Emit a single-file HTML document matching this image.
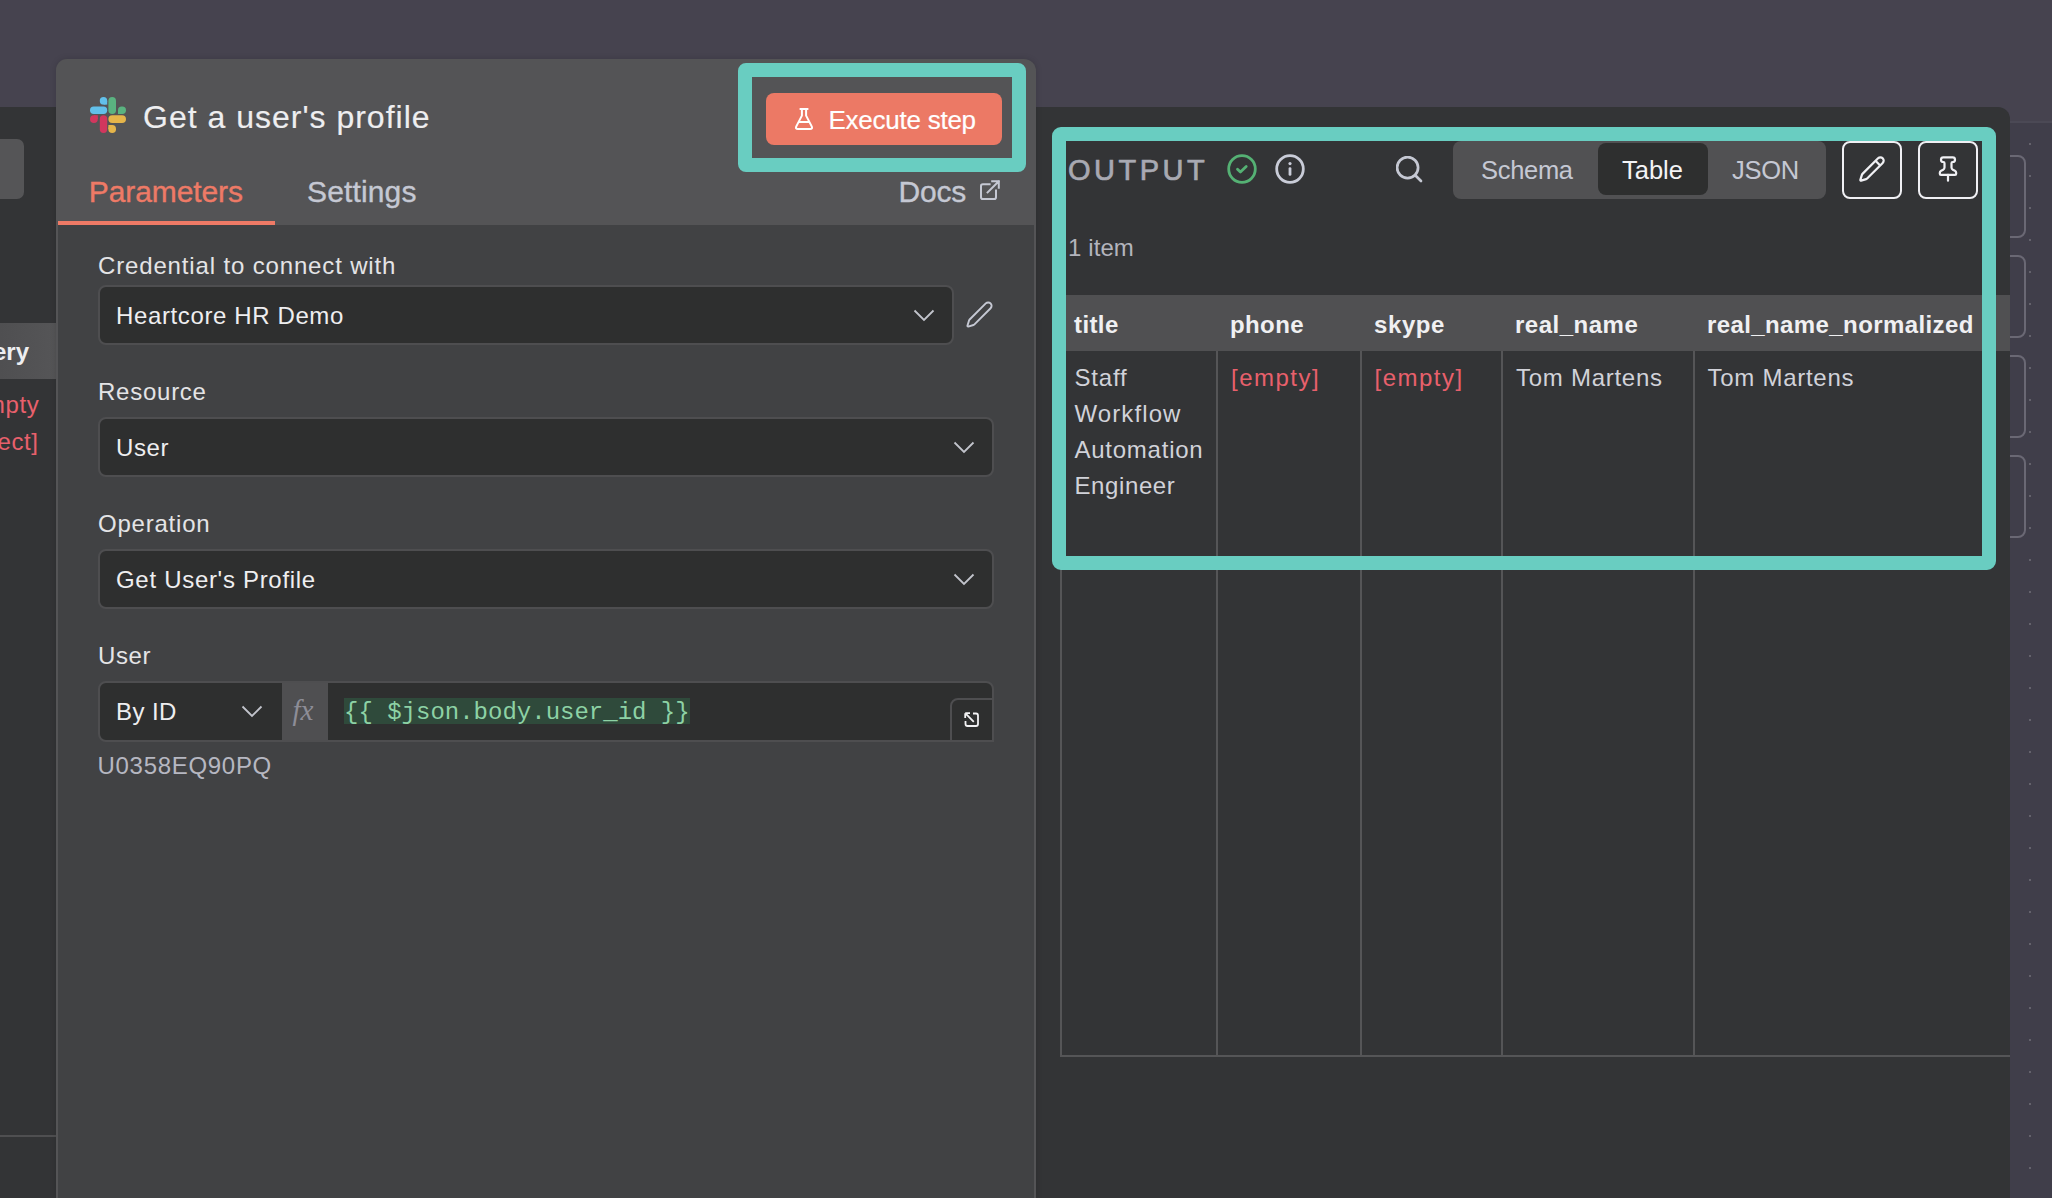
<!DOCTYPE html>
<html><head><meta charset="utf-8"><style>
html,body{margin:0;padding:0;}
body{width:2052px;height:1198px;overflow:hidden;position:relative;background:#46434f;font-family:"Liberation Sans",sans-serif;}
.t{position:absolute;white-space:nowrap;line-height:normal;}
.r{position:absolute;}
</style></head><body>
<div class="r" style="left:2010px;top:121px;width:42px;height:2px;background:#4b4955"></div>
<div class="r" style="left:2010px;top:123px;width:42px;height:1075px;background:#403e4a"></div>
<div class="r" style="left:2029px;top:143px;width:2px;height:2px;background:#64626c"></div>
<div class="r" style="left:2029px;top:175px;width:2px;height:2px;background:#64626c"></div>
<div class="r" style="left:2029px;top:207px;width:2px;height:2px;background:#64626c"></div>
<div class="r" style="left:2029px;top:239px;width:2px;height:2px;background:#64626c"></div>
<div class="r" style="left:2029px;top:271px;width:2px;height:2px;background:#64626c"></div>
<div class="r" style="left:2029px;top:303px;width:2px;height:2px;background:#64626c"></div>
<div class="r" style="left:2029px;top:335px;width:2px;height:2px;background:#64626c"></div>
<div class="r" style="left:2029px;top:367px;width:2px;height:2px;background:#64626c"></div>
<div class="r" style="left:2029px;top:399px;width:2px;height:2px;background:#64626c"></div>
<div class="r" style="left:2029px;top:431px;width:2px;height:2px;background:#64626c"></div>
<div class="r" style="left:2029px;top:463px;width:2px;height:2px;background:#64626c"></div>
<div class="r" style="left:2029px;top:495px;width:2px;height:2px;background:#64626c"></div>
<div class="r" style="left:2029px;top:527px;width:2px;height:2px;background:#64626c"></div>
<div class="r" style="left:2029px;top:559px;width:2px;height:2px;background:#64626c"></div>
<div class="r" style="left:2029px;top:591px;width:2px;height:2px;background:#64626c"></div>
<div class="r" style="left:2029px;top:623px;width:2px;height:2px;background:#64626c"></div>
<div class="r" style="left:2029px;top:655px;width:2px;height:2px;background:#64626c"></div>
<div class="r" style="left:2029px;top:687px;width:2px;height:2px;background:#64626c"></div>
<div class="r" style="left:2029px;top:719px;width:2px;height:2px;background:#64626c"></div>
<div class="r" style="left:2029px;top:751px;width:2px;height:2px;background:#64626c"></div>
<div class="r" style="left:2029px;top:783px;width:2px;height:2px;background:#64626c"></div>
<div class="r" style="left:2029px;top:815px;width:2px;height:2px;background:#64626c"></div>
<div class="r" style="left:2029px;top:847px;width:2px;height:2px;background:#64626c"></div>
<div class="r" style="left:2029px;top:879px;width:2px;height:2px;background:#64626c"></div>
<div class="r" style="left:2029px;top:911px;width:2px;height:2px;background:#64626c"></div>
<div class="r" style="left:2029px;top:943px;width:2px;height:2px;background:#64626c"></div>
<div class="r" style="left:2029px;top:975px;width:2px;height:2px;background:#64626c"></div>
<div class="r" style="left:2029px;top:1007px;width:2px;height:2px;background:#64626c"></div>
<div class="r" style="left:2029px;top:1039px;width:2px;height:2px;background:#64626c"></div>
<div class="r" style="left:2029px;top:1071px;width:2px;height:2px;background:#64626c"></div>
<div class="r" style="left:2029px;top:1103px;width:2px;height:2px;background:#64626c"></div>
<div class="r" style="left:2029px;top:1135px;width:2px;height:2px;background:#64626c"></div>
<div class="r" style="left:2029px;top:1167px;width:2px;height:2px;background:#64626c"></div>
<div class="r" style="left:1990px;top:155px;width:36px;height:83px;border:2px solid #6a6874;border-radius:8px;box-sizing:border-box"></div>
<div class="r" style="left:1990px;top:255px;width:36px;height:83px;border:2px solid #6a6874;border-radius:8px;box-sizing:border-box"></div>
<div class="r" style="left:1990px;top:355px;width:36px;height:83px;border:2px solid #6a6874;border-radius:8px;box-sizing:border-box"></div>
<div class="r" style="left:1990px;top:455px;width:36px;height:83px;border:2px solid #6a6874;border-radius:8px;box-sizing:border-box"></div>
<div class="r" style="left:0px;top:107px;width:2010px;height:1091px;background:#333436;border-top-right-radius:12px"></div>
<div class="r" style="left:-20px;top:139px;width:44px;height:60px;background:#555557;border-radius:7px"></div>
<div class="r" style="left:0px;top:323px;width:56px;height:56px;background:linear-gradient(90deg,#4f4f51 0%,#555557 100%)"></div>
<div class="t" style="left:-7.0px;top:338.3px;font-size:24px;color:#eeeef0;font-weight:bold;letter-spacing:0px;font-family:'Liberation Sans', sans-serif;">ery</div>
<div class="t" style="left:-8.5px;top:391.3px;font-size:24px;color:#e8606c;font-weight:normal;letter-spacing:0.6px;font-family:'Liberation Sans', sans-serif;">npty</div>
<div class="t" style="left:-2.5px;top:428.3px;font-size:24px;color:#e8606c;font-weight:normal;letter-spacing:0.6px;font-family:'Liberation Sans', sans-serif;">ect]</div>
<div class="r" style="left:0px;top:1135px;width:56px;height:2px;background:#4f4f51"></div>
<div class="r" style="left:56px;top:59px;width:980px;height:1139px;background:#545456;border-radius:11px 12px 0 0;box-shadow:0 0 6px rgba(0,0,0,0.15)"></div>
<div class="r" style="left:58px;top:225px;width:976px;height:973px;background:#414244"></div>
<svg class="r" style="left:90px;top:97px;" width="36" height="36" viewBox="0 0 36 36" fill="none">
<rect x="0" y="9.6" width="17.2" height="7.4" rx="3.7" fill="#62c0ea"/>
<rect x="9.8" y="0" width="7.4" height="7.6" rx="3.7" fill="#62c0ea"/><rect x="13.5" y="3.8" width="3.7" height="3.8" fill="#62c0ea"/>
<rect x="18.4" y="0" width="7.6" height="17" rx="3.8" fill="#5ab380"/>
<rect x="28" y="9.6" width="8" height="7.4" rx="3.7" fill="#5ab380"/><rect x="28" y="13.3" width="3.9" height="3.7" fill="#5ab380"/>
<rect x="0" y="18.2" width="7.8" height="7.8" rx="3.9" fill="#d1375e"/><rect x="3.9" y="18.2" width="3.9" height="3.9" fill="#d1375e"/>
<rect x="9.8" y="18.2" width="7.4" height="17.8" rx="3.7" fill="#d1375e"/>
<rect x="18.4" y="18.2" width="17.6" height="7.8" rx="3.9" fill="#e5b54a"/>
<rect x="18.4" y="28" width="7.6" height="8" rx="3.8" fill="#e5b54a"/><rect x="18.4" y="28" width="3.8" height="4" fill="#e5b54a"/>
</svg>
<div class="t" style="left:143.0px;top:98.5px;font-size:32px;color:#eeeef0;font-weight:normal;letter-spacing:1.0px;font-family:'Liberation Sans', sans-serif;-webkit-text-stroke:0.15px #eeeef0">Get a user's profile</div>
<div class="r" style="left:738px;top:63px;width:288px;height:109px;border:14px solid #69cdc1;border-radius:8px;box-sizing:border-box"></div>
<div class="r" style="left:766px;top:93px;width:236px;height:52px;background:#ec7965;border-radius:8px"></div>
<svg class="r" style="left:795px;top:108px;" width="18" height="22" viewBox="0 0 18 22" fill="none"><path d="M4.6 1H13.4M6.9 1V7.6L1.3 18.4Q0.2 21 3 21H15Q17.8 21 16.7 18.4L11.1 7.6V1M4.3 14H13.7" stroke="#fff" stroke-width="2" stroke-linejoin="round"/></svg>
<div class="t" style="left:828.5px;top:104.5px;font-size:26px;color:#ffffff;font-weight:normal;letter-spacing:-0.25px;font-family:'Liberation Sans', sans-serif;-webkit-text-stroke:0.2px #fff">Execute step</div>
<div class="t" style="left:88.8px;top:174.8px;font-size:30px;color:#ee7a66;font-weight:normal;letter-spacing:-0.1px;font-family:'Liberation Sans', sans-serif;-webkit-text-stroke:0.35px #ee7a66">Parameters</div>
<div class="t" style="left:307.0px;top:174.8px;font-size:30px;color:#c5c8d3;font-weight:normal;letter-spacing:0.15px;font-family:'Liberation Sans', sans-serif;-webkit-text-stroke:0.35px #c5c8d3">Settings</div>
<div class="r" style="left:58px;top:221px;width:217px;height:4px;background:#ee7a66"></div>
<div class="t" style="left:898.5px;top:174.8px;font-size:30px;color:#c5c8d3;font-weight:normal;letter-spacing:-0.2px;font-family:'Liberation Sans', sans-serif;-webkit-text-stroke:0.35px #c5c8d3">Docs</div>
<svg class="r" style="left:980px;top:180px;" width="20" height="20" viewBox="0 0 20 20" fill="none"><path d="M9.6 4.2H2.8Q1 4.2 1 6V17.2Q1 19 2.8 19H14.2Q16 19 16 17.2V10.4M7.6 12.4L18.8 1.2M12.2 1.2H18.8V7.8" stroke="#c5c8d3" stroke-width="2" stroke-linecap="square"/></svg>
<div class="t" style="left:98.0px;top:252.3px;font-size:24px;color:#e4e4e6;font-weight:normal;letter-spacing:0.85px;font-family:'Liberation Sans', sans-serif;">Credential to connect with</div>
<div class="r" style="left:98px;top:285px;width:856px;height:60px;background:#2e2f2f;border:2px solid #4e4e50;border-radius:8px;box-sizing:border-box"></div>
<div class="t" style="left:116.0px;top:302.3px;font-size:24px;color:#eeeef0;font-weight:normal;letter-spacing:0.62px;font-family:'Liberation Sans', sans-serif;">Heartcore HR Demo</div>
<svg class="r" style="left:913px;top:309px;" width="22" height="13" viewBox="0 0 22 13" fill="none"><path d="M1.5 1.5L11 11L20.5 1.5" stroke="#c2c4cc" stroke-width="1.8"/></svg>
<svg class="r" style="left:965px;top:300px;" width="29" height="29" viewBox="0 0 24 24" fill="none"><path d="M21.174 6.812a1 1 0 0 0-3.986-3.987L3.842 16.174a2 2 0 0 0-.5.83l-1.321 4.352a.5.5 0 0 0 .623.622l4.353-1.32a2 2 0 0 0 .83-.497z" stroke="#c5c8d3" stroke-width="1.6" stroke-linejoin="round"/></svg>
<div class="t" style="left:98.0px;top:378.3px;font-size:24px;color:#e4e4e6;font-weight:normal;letter-spacing:0.75px;font-family:'Liberation Sans', sans-serif;">Resource</div>
<div class="r" style="left:98px;top:417px;width:896px;height:60px;background:#2e2f2f;border:2px solid #4e4e50;border-radius:8px;box-sizing:border-box"></div>
<div class="t" style="left:116.0px;top:434.3px;font-size:24px;color:#eeeef0;font-weight:normal;letter-spacing:0.6px;font-family:'Liberation Sans', sans-serif;">User</div>
<svg class="r" style="left:953px;top:441px;" width="22" height="13" viewBox="0 0 22 13" fill="none"><path d="M1.5 1.5L11 11L20.5 1.5" stroke="#c2c4cc" stroke-width="1.8"/></svg>
<div class="t" style="left:98.0px;top:510.3px;font-size:24px;color:#e4e4e6;font-weight:normal;letter-spacing:0.78px;font-family:'Liberation Sans', sans-serif;">Operation</div>
<div class="r" style="left:98px;top:549px;width:896px;height:60px;background:#2e2f2f;border:2px solid #4e4e50;border-radius:8px;box-sizing:border-box"></div>
<div class="t" style="left:116.0px;top:566.3px;font-size:24px;color:#eeeef0;font-weight:normal;letter-spacing:0.7px;font-family:'Liberation Sans', sans-serif;">Get User's Profile</div>
<svg class="r" style="left:953px;top:573px;" width="22" height="13" viewBox="0 0 22 13" fill="none"><path d="M1.5 1.5L11 11L20.5 1.5" stroke="#c2c4cc" stroke-width="1.8"/></svg>
<div class="t" style="left:98.0px;top:642.3px;font-size:24px;color:#e4e4e6;font-weight:normal;letter-spacing:0.6px;font-family:'Liberation Sans', sans-serif;">User</div>
<div class="r" style="left:98px;top:681px;width:896px;height:61px;background:#2e2f2f;border:2px solid #4e4e50;border-radius:8px;box-sizing:border-box"></div>
<div class="r" style="left:282px;top:683px;width:46px;height:57px;background:#4f4f51"></div>
<div class="t" style="left:116.0px;top:698.3px;font-size:24px;color:#eeeef0;font-weight:normal;letter-spacing:0.4px;font-family:'Liberation Sans', sans-serif;">By ID</div>
<svg class="r" style="left:241px;top:705px;" width="22" height="13" viewBox="0 0 22 13" fill="none"><path d="M1.5 1.5L11 11L20.5 1.5" stroke="#c2c4cc" stroke-width="1.8"/></svg>
<div class="t" style="left:292.5px;top:693.8px;font-size:29px;color:#8d8d97;font-weight:normal;letter-spacing:0px;font-family:'Liberation Serif', serif;font-style:italic">fx</div>
<div class="r" style="left:344px;top:698px;width:346px;height:26px;background:#2f4a3b"></div>
<div class="t" style="left:344.0px;top:698.8px;font-size:24px;color:#8dd2a5;font-weight:normal;letter-spacing:0px;font-family:'Liberation Mono', monospace;">{{ $json.body.user_id }}</div>
<div class="r" style="left:950px;top:698px;width:44px;height:44px;background:#2e2f2f;border:2px solid #4e4e50;border-top-left-radius:8px;box-sizing:border-box"></div>
<svg class="r" style="left:964px;top:712px;" width="16" height="16" viewBox="0 0 16 16" fill="none"><path d="M9 1.5H12Q14 1.5 14 3.5V12Q14 14 12 14H3.5Q1.5 14 1.5 12V9M1.2 1.2L9.8 9.8M1.2 1.2V6M1.2 1.2H6" stroke="#f2f2f4" stroke-width="1.8"/></svg>
<div class="t" style="left:97.5px;top:752.3px;font-size:24px;color:#b6b7c1;font-weight:normal;letter-spacing:0.7px;font-family:'Liberation Sans', sans-serif;">U0358EQ90PQ</div>
<div class="t" style="left:1068.0px;top:153.8px;font-size:29px;color:#a8a9b2;font-weight:normal;letter-spacing:3.5px;font-family:'Liberation Sans', sans-serif;-webkit-text-stroke:0.7px #a8a9b2">OUTPUT</div>
<svg class="r" style="left:1227px;top:154px;" width="30" height="30" viewBox="0 0 30 30" fill="none"><circle cx="15" cy="15" r="13.3" stroke="#55b174" stroke-width="2.8"/><path d="M10.5 15.2L13.4 18L19.2 12.4" stroke="#55b174" stroke-width="2.8" stroke-linecap="round" stroke-linejoin="round"/></svg>
<svg class="r" style="left:1275px;top:154px;" width="30" height="30" viewBox="0 0 30 30" fill="none"><circle cx="15" cy="15" r="13.3" stroke="#c9ccd8" stroke-width="2.8"/><circle cx="15" cy="9.6" r="1.6" fill="#c9ccd8"/><path d="M15 14.6V20.4" stroke="#c9ccd8" stroke-width="2.8" stroke-linecap="round"/></svg>
<svg class="r" style="left:1396px;top:156px;" width="28" height="28" viewBox="0 0 28 28" fill="none"><circle cx="11.6" cy="11.6" r="10.5" stroke="#c5c8d3" stroke-width="2.7"/><path d="M19.2 19.2L25 25" stroke="#c5c8d3" stroke-width="2.7" stroke-linecap="round"/></svg>
<div class="r" style="left:1453px;top:141px;width:373px;height:58px;background:#515153;border-radius:8px"></div>
<div class="r" style="left:1598px;top:143px;width:110px;height:52px;background:#2e2f2f;border-radius:8px"></div>
<div class="t" style="left:1481.0px;top:155.9px;font-size:25.5px;color:#c5c8d3;font-weight:normal;letter-spacing:-0.3px;font-family:'Liberation Sans', sans-serif;">Schema</div>
<div class="t" style="left:1622.0px;top:155.9px;font-size:25.5px;color:#f4f4f6;font-weight:normal;letter-spacing:0px;font-family:'Liberation Sans', sans-serif;">Table</div>
<div class="t" style="left:1732.0px;top:155.9px;font-size:25.5px;color:#c5c8d3;font-weight:normal;letter-spacing:-0.3px;font-family:'Liberation Sans', sans-serif;">JSON</div>
<div class="r" style="left:1842px;top:141px;width:60px;height:58px;border:2px solid #f0f0f4;border-radius:8px;box-sizing:border-box"></div>
<svg class="r" style="left:1858px;top:155px;" width="28" height="28" viewBox="0 0 24 24" fill="none"><path d="M21.174 6.812a1 1 0 0 0-3.986-3.987L3.842 16.174a2 2 0 0 0-.5.83l-1.321 4.352a.5.5 0 0 0 .623.622l4.353-1.32a2 2 0 0 0 .83-.497z" stroke="#f0f0f4" stroke-width="1.9" stroke-linejoin="round"/><path d="m15 5 4 4" stroke="#f0f0f4" stroke-width="1.9"/></svg>
<div class="r" style="left:1918px;top:141px;width:60px;height:58px;border:2px solid #f0f0f4;border-radius:8px;box-sizing:border-box"></div>
<svg class="r" style="left:1934px;top:155px;" width="28" height="28" viewBox="0 0 24 24" fill="none"><path d="M12 17v5" stroke="#f0f0f4" stroke-width="1.9" stroke-linecap="round"/><path d="M9 10.76a2 2 0 0 1-1.11 1.79l-1.78.9A2 2 0 0 0 5 15.24V16a1 1 0 0 0 1 1h12a1 1 0 0 0 1-1v-.76a2 2 0 0 0-1.11-1.79l-1.78-.9A2 2 0 0 1 15 10.76V7a1 1 0 0 1 1-1 2 2 0 0 0 0-4H8a2 2 0 0 0 0 4 1 1 0 0 1 1 1z" stroke="#f0f0f4" stroke-width="1.9" stroke-linejoin="round"/></svg>
<div class="t" style="left:1068.0px;top:234.3px;font-size:24px;color:#b3b4bd;font-weight:normal;letter-spacing:0.1px;font-family:'Liberation Sans', sans-serif;">1 item</div>
<div class="r" style="left:1061px;top:295px;width:949px;height:56px;background:#505052"></div>
<div class="t" style="left:1074.0px;top:311.3px;font-size:24px;color:#f0f0f2;font-weight:bold;letter-spacing:0.4px;font-family:'Liberation Sans', sans-serif;">title</div>
<div class="t" style="left:1230.0px;top:311.3px;font-size:24px;color:#f0f0f2;font-weight:bold;letter-spacing:0.4px;font-family:'Liberation Sans', sans-serif;">phone</div>
<div class="t" style="left:1374.0px;top:311.3px;font-size:24px;color:#f0f0f2;font-weight:bold;letter-spacing:0.6px;font-family:'Liberation Sans', sans-serif;">skype</div>
<div class="t" style="left:1515.0px;top:311.3px;font-size:24px;color:#f0f0f2;font-weight:bold;letter-spacing:0.5px;font-family:'Liberation Sans', sans-serif;">real_name</div>
<div class="t" style="left:1707.0px;top:311.3px;font-size:24px;color:#f0f0f2;font-weight:bold;letter-spacing:0.4px;font-family:'Liberation Sans', sans-serif;">real_name_normalized</div>
<div class="r" style="left:1060px;top:351px;width:2px;height:706px;background:#555557"></div>
<div class="r" style="left:1216px;top:351px;width:2px;height:706px;background:#555557"></div>
<div class="r" style="left:1360px;top:351px;width:2px;height:706px;background:#555557"></div>
<div class="r" style="left:1501px;top:351px;width:2px;height:706px;background:#555557"></div>
<div class="r" style="left:1693px;top:351px;width:2px;height:706px;background:#555557"></div>
<div class="r" style="left:1060px;top:1055px;width:950px;height:2px;background:#555557"></div>
<div class="t" style="left:1074.5px;top:364.3px;font-size:24px;color:#d1d2d9;font-weight:normal;letter-spacing:0.8px;font-family:'Liberation Sans', sans-serif;">Staff</div>
<div class="t" style="left:1074.5px;top:400.3px;font-size:24px;color:#d1d2d9;font-weight:normal;letter-spacing:1.1px;font-family:'Liberation Sans', sans-serif;">Workflow</div>
<div class="t" style="left:1074.5px;top:436.3px;font-size:24px;color:#d1d2d9;font-weight:normal;letter-spacing:0.75px;font-family:'Liberation Sans', sans-serif;">Automation</div>
<div class="t" style="left:1074.5px;top:472.3px;font-size:24px;color:#d1d2d9;font-weight:normal;letter-spacing:0.6px;font-family:'Liberation Sans', sans-serif;">Engineer</div>
<div class="t" style="left:1231.0px;top:364.3px;font-size:24px;color:#e8606c;font-weight:normal;letter-spacing:1.5px;font-family:'Liberation Sans', sans-serif;">[empty]</div>
<div class="t" style="left:1374.5px;top:364.3px;font-size:24px;color:#e8606c;font-weight:normal;letter-spacing:1.5px;font-family:'Liberation Sans', sans-serif;">[empty]</div>
<div class="t" style="left:1516.0px;top:364.3px;font-size:24px;color:#d1d2d9;font-weight:normal;letter-spacing:0.73px;font-family:'Liberation Sans', sans-serif;">Tom Martens</div>
<div class="t" style="left:1707.5px;top:364.3px;font-size:24px;color:#d1d2d9;font-weight:normal;letter-spacing:0.73px;font-family:'Liberation Sans', sans-serif;">Tom Martens</div>
<div class="r" style="left:1052px;top:127px;width:944px;height:443px;border:14px solid #69cdc1;border-radius:9px;box-sizing:border-box"></div>

</body></html>
